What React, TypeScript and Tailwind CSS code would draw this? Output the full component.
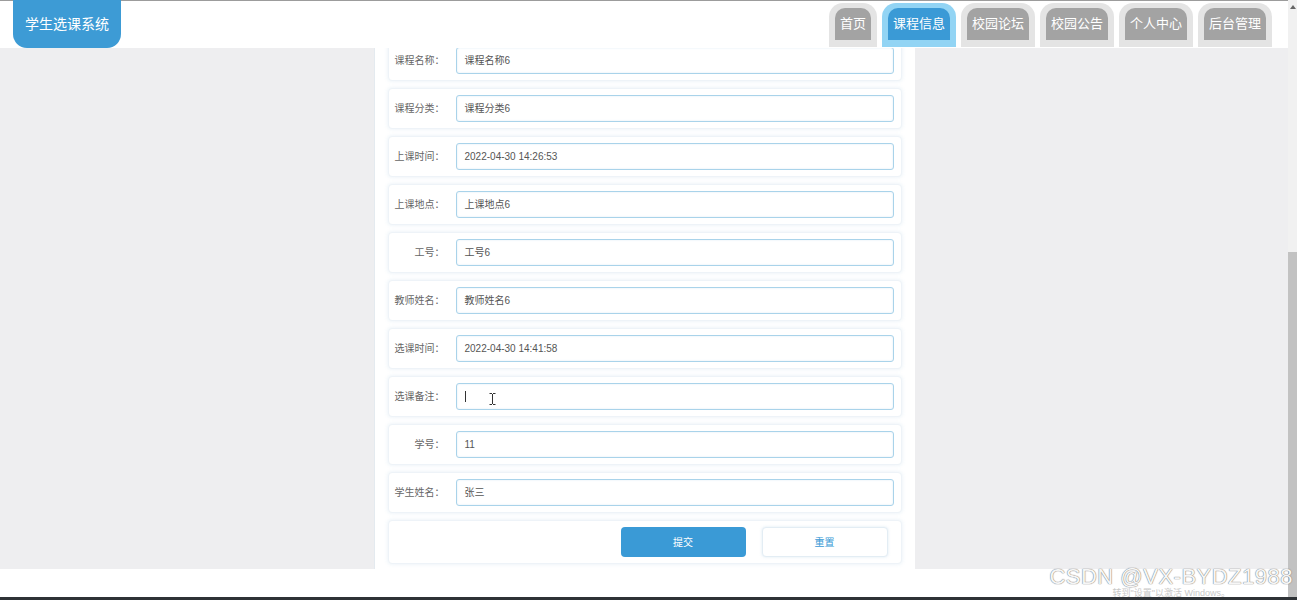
import React from "react";

const tabs = ["首页", "课程信息", "校园论坛", "校园公告", "个人中心", "后台管理"];

const fields: { label: string; value: string; caret?: boolean }[] = [
  { label: "课程名称", value: "课程名称6" },
  { label: "课程分类", value: "课程分类6" },
  { label: "上课时间", value: "2022-04-30 14:26:53" },
  { label: "上课地点", value: "上课地点6" },
  { label: "工号", value: "工号6" },
  { label: "教师姓名", value: "教师姓名6" },
  { label: "选课时间", value: "2022-04-30 14:41:58" },
  { label: "选课备注", value: "", caret: true },
  { label: "学号", value: "11" },
  { label: "学生姓名", value: "张三" },
];

function Tab({ name, active }: { name: string; active?: boolean }) {
  return (
    <div
      className={`rounded-t-[14px] px-[6px] pt-[5px] pb-[7px] ${active ? "bg-[#92d4f4]" : "bg-[#e4e4e4]"}`}
    >
      <div
        className={`flex h-[32px] items-center justify-center rounded-t-[10px] px-[5px] text-[13px] text-white ${
          active ? "bg-[#3a9ad6]" : "bg-[#a3a3a3]"
        }`}
      >
        {name}
      </div>
    </div>
  );
}

function FieldRow({ label, value, caret }: { label: string; value: string; caret?: boolean }) {
  return (
    <div className="flex h-[41px] items-center rounded-[4px] border border-[#eef3f8] bg-white pr-[7px] shadow-[0_0_4px_rgba(120,170,210,0.18)]">
      <div className="w-[67px] pr-[11px] text-right text-[10px] text-[#666]">{label}：</div>
      <div className="relative flex h-[27px] flex-1 items-center rounded-[3px] border border-[#a9d3ea] bg-white pl-[8px] text-[10px] text-[#555] shadow-[inset_0_0_2px_rgba(120,180,220,0.25)]">
        {caret ? (
          <>
            <span className="h-[11px] w-px bg-[#333]" />
            <svg className="absolute left-[32px] top-[9px]" width="7" height="12" viewBox="0 0 7 12">
              <path d="M0.5 0.5h2.5M4 0.5h2.5M3.5 1v10M0.5 11.5h2.5M4 11.5h2.5" stroke="#333" strokeWidth="1" fill="none" />
            </svg>
          </>
        ) : (
          value
        )}
      </div>
    </div>
  );
}

export default function App() {
  return (
    <div
      className="relative flex h-[600px] flex-col overflow-hidden bg-white"
      style={{ fontFamily: '"Liberation Sans", "Noto Sans CJK SC", sans-serif' }}
    >
      <div className="flex min-h-0 flex-1">
        <div className="flex min-w-0 flex-1 flex-col border-t border-[#9c9c9c]">
          {/* header */}
          <header className="flex h-[47px] shrink-0 items-start justify-between bg-white">
            <div className="ml-[13px] -mt-px flex h-[48px] w-[108px] items-center justify-center rounded-b-[14px] bg-[#3d9bd5] text-[14px] text-white">
              学生选课系统
            </div>
            <nav className="mr-[16px] mt-[2px] flex gap-[5px]">
              {tabs.map((t) => (
                <Tab key={t} name={t} active={t === "课程信息"} />
              ))}
            </nav>
          </header>

          {/* body */}
          <main className="flex min-h-0 flex-1 justify-center bg-[#eeeef0]">
            <section className="flex w-[541px] flex-col overflow-hidden border-l border-[#e4eaef] bg-white px-[13px]">
              <div className="-mt-[8px] flex flex-col gap-[7px]">
                {fields.map((f) => (
                  <FieldRow key={f.label} {...f} />
                ))}
                <div className="flex h-[44px] items-center justify-end gap-[16px] rounded-[4px] border border-[#eef3f8] bg-white pr-[13px] shadow-[0_0_4px_rgba(120,170,210,0.18)]">
                  <button className="h-[30px] w-[125px] rounded-[4px] bg-[#3a9ad6] text-[10px] text-white">提交</button>
                  <button className="h-[30px] w-[126px] rounded-[4px] border border-[#e3edf4] bg-white text-[10px] text-[#3a9ad6] shadow-[0_0_3px_rgba(120,170,210,0.25)]">
                    重置
                  </button>
                </div>
              </div>
            </section>
          </main>

          <footer className="h-[28px] shrink-0 bg-white" />
        </div>

        {/* scrollbar */}
        <div className="flex w-[9px] shrink-0 flex-col bg-[#f1f1f1]">
          <div className="flex h-[252px] justify-center pt-[5px]">
            <div className="h-0 w-0 border-x-[3px] border-b-[4px] border-x-transparent border-b-[#666]" />
          </div>
          <div className="flex-1 bg-[#c2c2c2]" />
        </div>
      </div>
      <div className="h-[3px] shrink-0 bg-[#2e3236]" />

      {/* watermark */}
      <div className="pointer-events-none absolute bottom-[2px] right-[4px] flex flex-col items-center">
        <div className="text-[22px] leading-[26px] tracking-[0.5px] text-[#f6f6f6] [text-shadow:0_0_1px_#7a7a7a,0_0_1px_#7a7a7a]">
          CSDN @VX-BYDZ1988
        </div>
        <div className="-mt-[2px] text-[9px] leading-[10px] text-[#c8c8c8]">转到"设置"以激活 Windows。</div>
      </div>
    </div>
  );
}
